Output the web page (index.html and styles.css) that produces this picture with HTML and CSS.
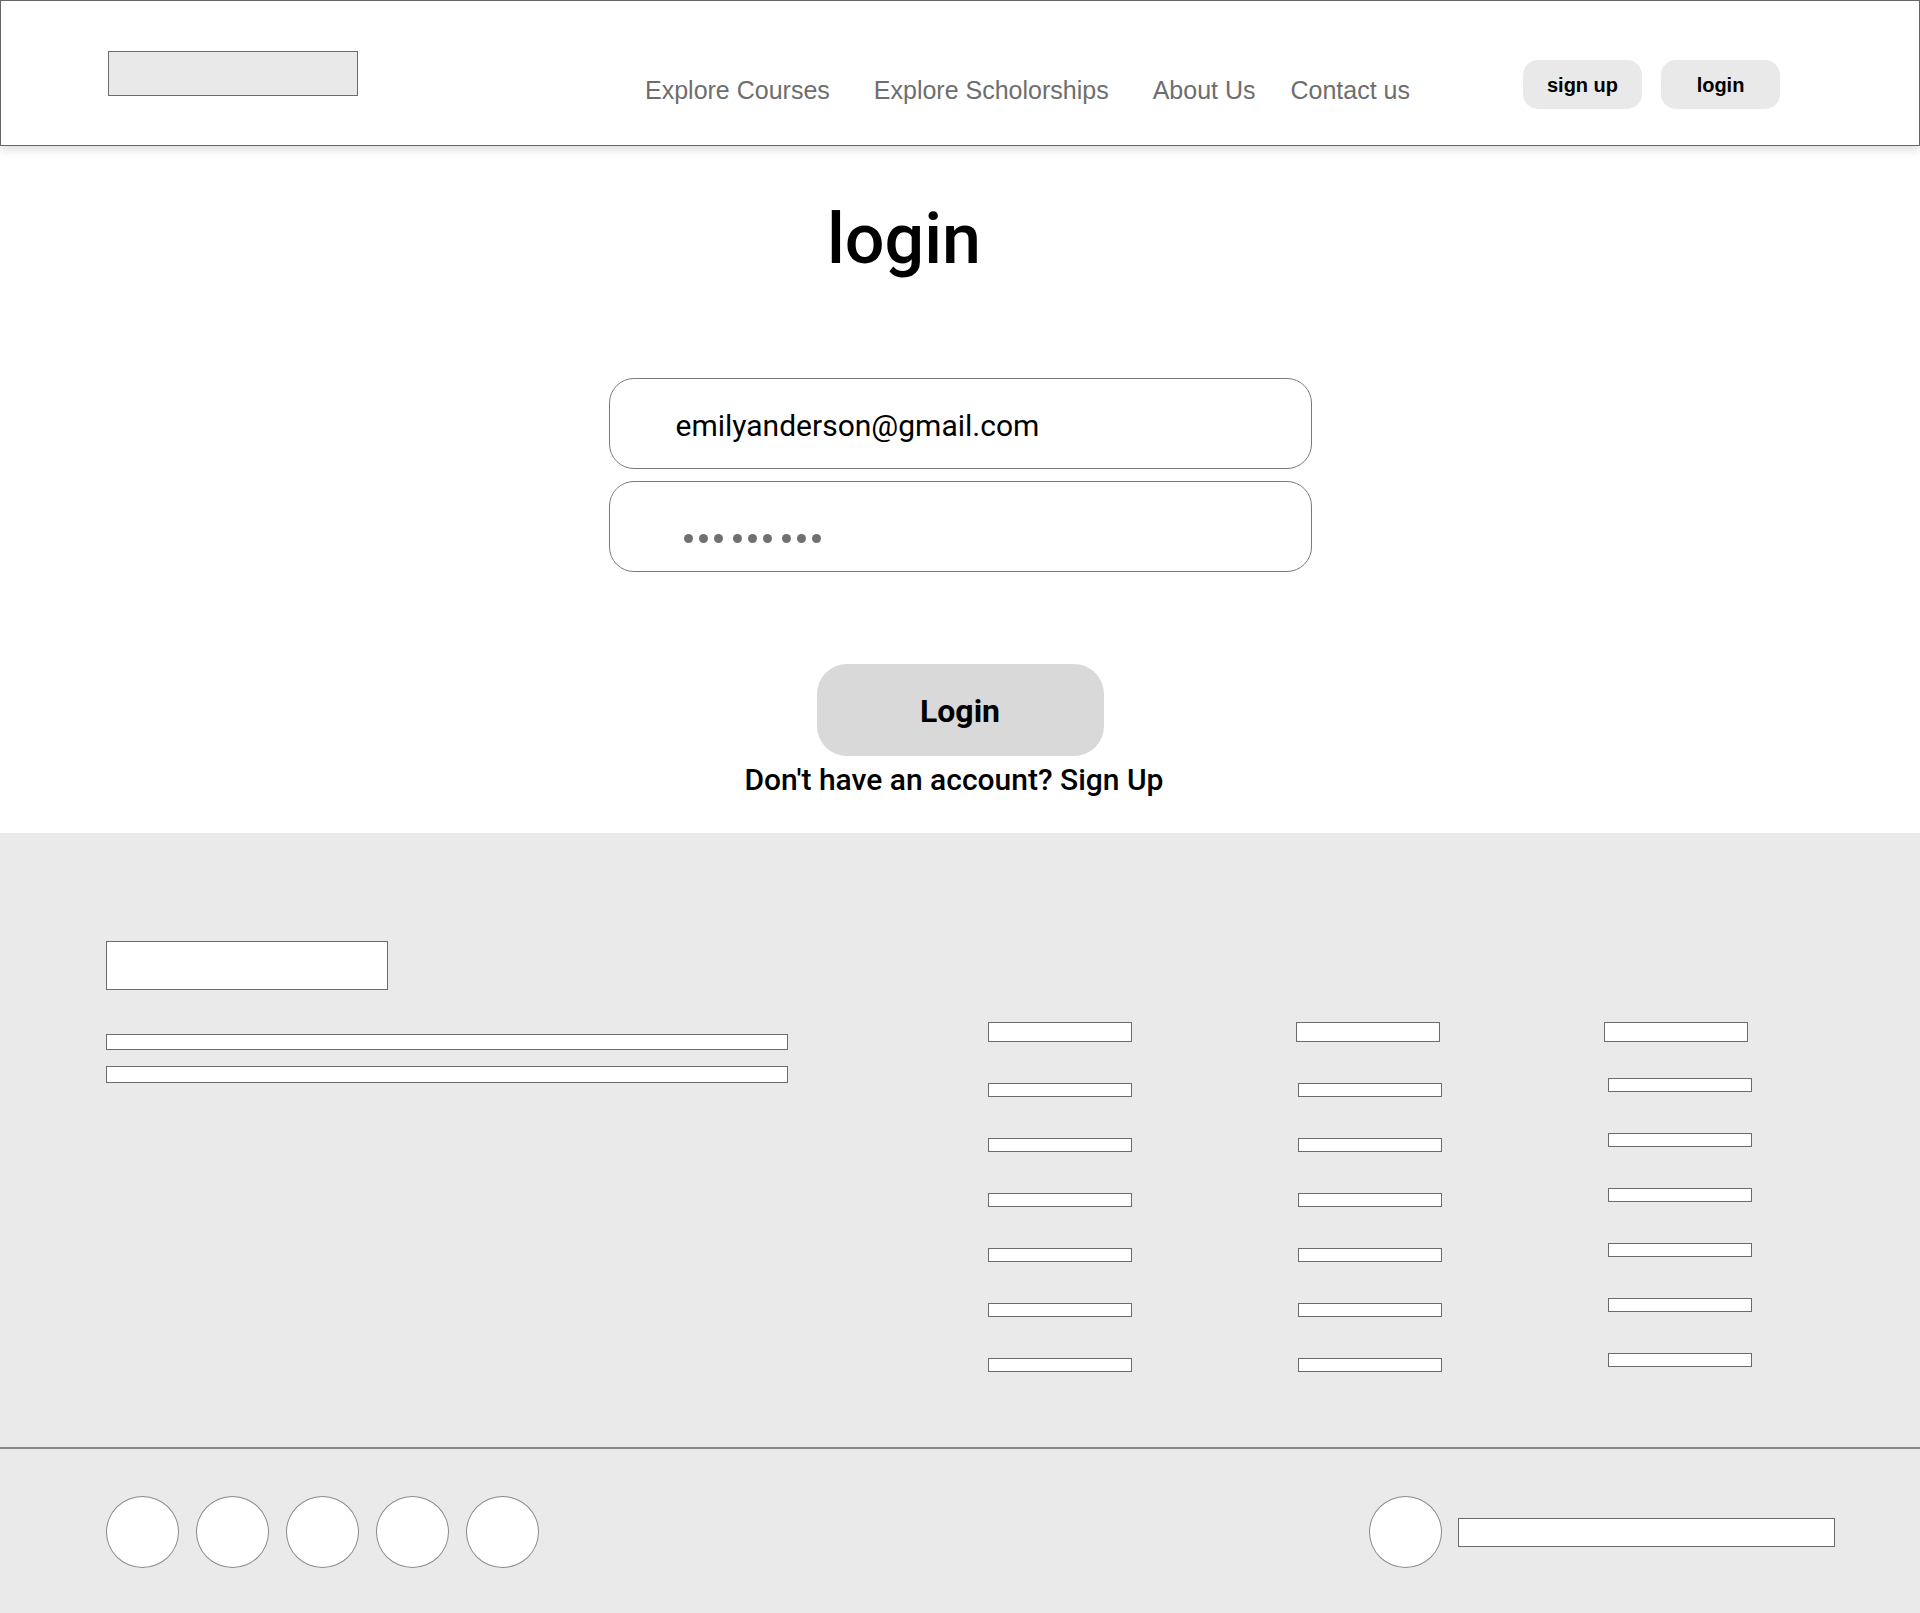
FILE: index.html
```html
<!DOCTYPE html>
<html lang="en">
<head>
<meta charset="utf-8">
<title>login</title>
<link rel="stylesheet" href="styles.css">
</head>
<body>
<header class="site-header">
  <div class="logo"></div>
  <nav class="nav">
    <a class="nav-link">Explore Courses</a>
    <a class="nav-link">Explore Scholorships</a>
    <a class="nav-link">About Us</a>
    <a class="nav-link nav-link-tight">Contact us</a>
  </nav>
  <div class="auth">
    <button class="pill">sign up</button>
    <button class="pill">login</button>
  </div>
</header>

<main class="main">
  <h1 class="title">login</h1>
  <div class="field field-email">emilyanderson@gmail.com</div>
  <div class="field field-pass">
    <span class="dots"><span class="dot"></span><span class="dot"></span><span class="dot"></span></span>
    <span class="dots"><span class="dot"></span><span class="dot"></span><span class="dot"></span></span>
    <span class="dots"><span class="dot"></span><span class="dot"></span><span class="dot"></span></span>
  </div>
  <button class="login-btn">Login</button>
  <p class="signup-text">Don't have an account? Sign Up</p>
</main>

<footer class="footer">
  <div class="footer-top">
    <div class="footer-about">
      <div class="f-logo"></div>
      <div class="f-line"></div>
      <div class="f-line f-line-2"></div>
    </div>
    <div class="fcol fcol-1">
      <div class="fhead"></div>
      <div class="flist">
        <div class="fitem"></div><div class="fitem"></div><div class="fitem"></div>
        <div class="fitem"></div><div class="fitem"></div><div class="fitem"></div>
      </div>
    </div>
    <div class="fcol fcol-2">
      <div class="fhead"></div>
      <div class="flist flist-2">
        <div class="fitem"></div><div class="fitem"></div><div class="fitem"></div>
        <div class="fitem"></div><div class="fitem"></div><div class="fitem"></div>
      </div>
    </div>
    <div class="fcol fcol-3">
      <div class="fhead"></div>
      <div class="flist flist-3">
        <div class="fitem"></div><div class="fitem"></div><div class="fitem"></div>
        <div class="fitem"></div><div class="fitem"></div><div class="fitem"></div>
      </div>
    </div>
  </div>
  <div class="footer-divider"></div>
  <div class="footer-bottom">
    <div class="socials">
      <span class="circle"></span>
      <span class="circle"></span>
      <span class="circle"></span>
      <span class="circle"></span>
      <span class="circle"></span>
    </div>
    <div class="newsletter">
      <span class="circle"></span>
      <div class="news-bar"></div>
    </div>
  </div>
</footer>
</body>
</html>
```

FILE: styles.css
```css
* { box-sizing: border-box; }

html, body {
  margin: 0;
  padding: 0;
  background: #ffffff;
}

body {
  width: 1920px;
  font-family: "Liberation Sans", Arial, sans-serif;
}

/* ---------- header ---------- */
.site-header {
  position: relative;
  z-index: 2;
  display: flex;
  align-items: flex-start;
  height: 146px;
  padding-left: 107px;
  border: 1px solid #666666;
  background: #ffffff;
  box-shadow: 0 4px 8px rgba(0, 0, 0, 0.13);
}

.logo {
  width: 250px;
  height: 45px;
  margin-top: 50px;
  background: #e9e9e9;
  border: 1px solid #6c6c6c;
}

.nav {
  display: flex;
  gap: 44px;
  margin-left: 287px;
  margin-top: 75px;
}

.nav-link {
  font-size: 25px;
  line-height: 29px;
  color: #6e6e6e;
  white-space: nowrap;
}

.nav-link-tight { margin-left: -9px; }

.auth {
  display: flex;
  gap: 19px;
  margin-left: 113px;
  margin-top: 59px;
}

.pill {
  width: 119px;
  height: 49px;
  border: none;
  border-radius: 15px;
  background: #e9e9e9;
  font-family: "Liberation Sans", Arial, sans-serif;
  font-weight: bold;
  font-size: 20px;
  color: #000000;
  padding: 2px 0 0;
}

/* ---------- main ---------- */
.main {
  display: flex;
  flex-direction: column;
  align-items: center;
  padding: 52px 0 36px;
  font-family: Roboto, "Liberation Sans", sans-serif;
}

.title {
  align-self: stretch;
  margin: 0;
  padding-right: 112px;
  text-align: center;
  font-size: 70px;
  font-weight: 500;
  line-height: 82px;
  color: #000000;
}

.field {
  display: flex;
  align-items: center;
  width: 703px;
  height: 91px;
  border: 1px solid #7a7a7a;
  border-radius: 25px;
  padding-left: 66px;
  background: #ffffff;
}

.field-email {
  margin-top: 98px;
  padding-top: 3px;
  font-size: 30px;
  line-height: 35px;
  color: #000000;
}

.field-pass {
  margin-top: 12px;
  padding-left: 74px;
  padding-top: 23px;
  gap: 10px;
}

.dots {
  display: flex;
  gap: 6px;
}

.dot {
  width: 9px;
  height: 9px;
  border-radius: 50%;
  background: #707070;
}

.login-btn {
  width: 287px;
  height: 92px;
  margin-top: 92px;
  border: none;
  border-radius: 30px;
  background: #d9d9d9;
  font-family: Roboto, "Liberation Sans", sans-serif;
  font-weight: 700;
  font-size: 32px;
  color: #000000;
  padding: 2px 0 0;
}

.signup-text {
  margin: 6px 0 0;
  padding-right: 12px;
  font-size: 30px;
  font-weight: 500;
  line-height: 35px;
  color: #000000;
}

/* ---------- footer ---------- */
.footer {
  background: #eaeaea;
}

.footer-top {
  display: flex;
  align-items: flex-start;
  padding: 108px 0 75px 106px;
}

.footer-about {
  width: 682px;
  display: flex;
  flex-direction: column;
}

.f-logo {
  width: 282px;
  height: 49px;
  background: #ffffff;
  border: 1px solid #6b6b6b;
}

.f-line {
  width: 682px;
  height: 16px;
  margin-top: 44px;
  background: #ffffff;
  border: 1px solid #6b6b6b;
}

.f-line-2 {
  height: 17px;
  margin-top: 16px;
}

.fcol {
  width: 144px;
  margin-top: 81px;
  display: flex;
  flex-direction: column;
}

.fcol-1 { margin-left: 200px; }
.fcol-2 { margin-left: 164px; }
.fcol-3 { margin-left: 164px; }

.fhead {
  width: 144px;
  height: 20px;
  background: #ffffff;
  border: 1px solid #6b6b6b;
}

.flist {
  display: flex;
  flex-direction: column;
  gap: 41px;
  margin-top: 41px;
}

.flist-2 { margin-left: 2px; }
.flist-3 { margin-left: 4px; margin-top: 36px; }

.fitem {
  width: 144px;
  height: 14px;
  background: #ffffff;
  border: 1px solid #6b6b6b;
}

.footer-divider {
  height: 2px;
  background: #888888;
}

.footer-bottom {
  display: flex;
  justify-content: space-between;
  align-items: flex-start;
  height: 164px;
  padding: 47px 85px 0 106px;
}

.socials {
  display: flex;
  gap: 17px;
}

.circle {
  display: block;
  width: 73px;
  height: 72px;
  border-radius: 50%;
  background: #ffffff;
  border: 1px solid #8a8a8a;
}

.newsletter {
  display: flex;
  align-items: center;
  gap: 16px;
}

.news-bar {
  width: 377px;
  height: 29px;
  background: #ffffff;
  border: 1px solid #6b6b6b;
}
```
